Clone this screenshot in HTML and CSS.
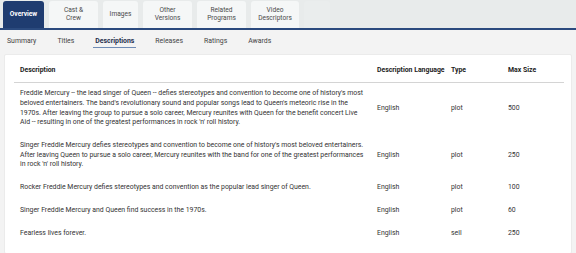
FILE: index.html
```html
<!DOCTYPE html>
<html lang="en">

<head>
    <meta charset="UTF-8">
    <title>Descriptions</title>
    <link rel="stylesheet" href="styles.css">
</head>

<body>
    <!-- Main tabs -->
    <div class="tabs">
        <div class="tab active">Overview</div>
        <div class="tab cast">Cast &amp;<br>Crew</div>
        <div class="tab images">Images</div>
        <div class="tab">Other<br>Versions</div>
        <div class="tab">Related<br>Programs</div>
        <div class="tab video">Video<br>Descriptors</div>
        <div class="tab ghost"></div>
    </div>

    <!-- Sub tabs -->
    <div class="subnav">
        <div class="subtab">Summary</div>
        <div class="subtab">Titles</div>
        <div class="subtab current">Descriptions</div>
        <div class="subtab">Releases</div>
        <div class="subtab">Ratings</div>
        <div class="subtab">Awards</div>
    </div>

    <div class="card">
        <table class="desc-table">
            <colgroup>
                <col class="c-desc">
                <col class="c-lang">
                <col class="c-type">
                <col class="c-size">
            </colgroup>
            <thead>
                <tr>
                    <th>Description</th>
                    <th>Description Language</th>
                    <th>Type</th>
                    <th>Max Size</th>
                </tr>
            </thead>
            <tbody>
                <tr>
                    <td>Freddie Mercury -- the lead singer of Queen -- defies stereotypes and convention to become one of history's most beloved entertainers. The band's revolutionary sound and popular songs lead to Queen's meteoric rise in the 1970s. After leaving the group to pursue a solo career, Mercury reunites with Queen for the benefit concert Live Aid -- resulting in one of the greatest performances in rock 'n' roll history.</td>
                    <td>English</td>
                    <td>plot</td>
                    <td>500</td>
                </tr>
                <tr>
                    <td>Singer Freddie Mercury defies stereotypes and convention to become one of history's most beloved entertainers. After leaving Queen to pursue a solo career, Mercury reunites with the band for one of the greatest performances in rock 'n' roll history.</td>
                    <td>English</td>
                    <td>plot</td>
                    <td>250</td>
                </tr>
                <tr>
                    <td>Rocker Freddie Mercury defies stereotypes and convention as the popular lead singer of Queen.</td>
                    <td>English</td>
                    <td>plot</td>
                    <td>100</td>
                </tr>
                <tr>
                    <td>Singer Freddie Mercury and Queen find success in the 1970s.</td>
                    <td>English</td>
                    <td>plot</td>
                    <td>60</td>
                </tr>
                <tr>
                    <td>Fearless lives forever.</td>
                    <td>English</td>
                    <td>sell</td>
                    <td>250</td>
                </tr>
            </tbody>
        </table>
    </div>
</body>

</html>
```

FILE: styles.css
```css
body {
    margin: 0;
    background: #f3f3f3;
    font-family: Roboto, "Liberation Sans", sans-serif;
    color: #333;
}

/* Main tabs */
.tabs {
    display: flex;
    gap: 5px;
    height: 27px;
    padding: 1px 3px 0;
    background: #e8ebeb;
    border-bottom: 2px solid #2b4a7e;
}

.tab {
    width: 49px;
    display: flex;
    align-items: center;
    justify-content: center;
    text-align: center;
    font-size: 6.6px;
    line-height: 7.5px;
    color: #4a4a4a;
    background: #f5f7f7;
    border-radius: 3px 3px 0 0;
}

.tab.active {
    width: 41px;
    background: #1f3c70;
    color: #fff;
    font-weight: bold;
}

.tab.images {
    width: 35px;
}

.tab.video {
    width: 48px;
}

.tab.ghost {
    width: 26px;
    background: #eaeded;
}

/* Sub tabs */
.subnav {
    display: flex;
    gap: 17px;
    padding: 0 5px;
    height: 22px;
}

.subtab {
    padding: 0 2px;
    font-size: 6.9px;
    line-height: 22px;
    color: #444;
    position: relative;
}

.subtab.current {
    font-weight: bold;
    color: #1f2f4d;
}

.subtab.current::after {
    content: "";
    position: absolute;
    left: 0;
    right: 0;
    bottom: 4px;
    height: 1.5px;
    background: #6f8bb5;
}

/* Card */
.card {
    margin: 2px 4px 0;
    padding: 5px 9px 8px;
    background: #fff;
    border: 1px solid #ebebeb;
    border-radius: 2px;
}

.desc-table {
    width: 550px;
    table-layout: fixed;
    border-collapse: collapse;
    font-size: 6.9px;
    line-height: 9.7px;
}

.c-desc {
    width: 357px;
}

.c-lang {
    width: 74px;
}

.c-type {
    width: 57px;
}

.c-size {
    width: 62px;
}

.desc-table th {
    text-align: left;
    font-weight: bold;
    color: #222;
    padding: 6px 6px;
    white-space: nowrap;
    border-bottom: 1px solid #d4d4d4;
}

.desc-table td {
    padding: 6.5px 6px;
    vertical-align: middle;
}
```
